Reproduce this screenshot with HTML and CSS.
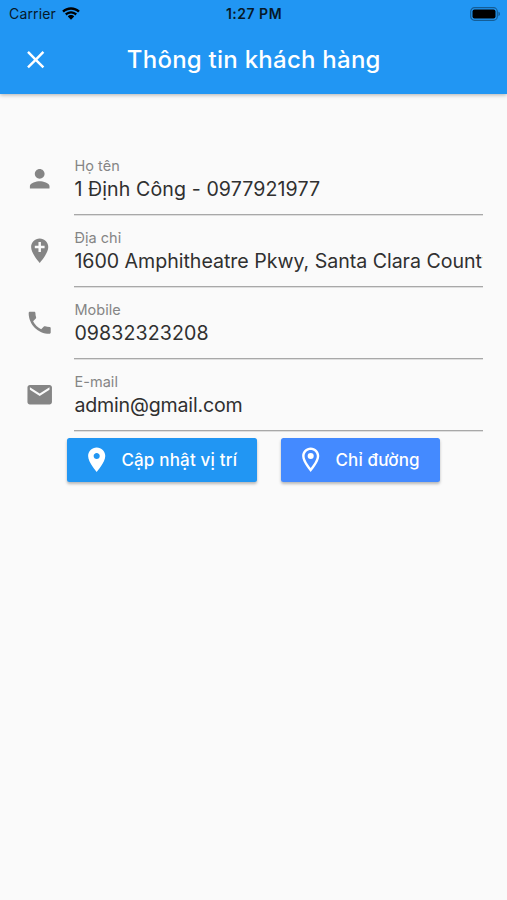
FILE: index.html
```html
<!DOCTYPE html>
<html lang="vi">
<head>
<meta charset="utf-8">
<title>Thông tin khách hàng</title>
<link rel="stylesheet" href="styles.css">
</head>
<body>
<header class="header">
  <div class="status">
    <div class="carrier"><span class="carrier-name">Carrier</span>
      <svg class="wifi" viewBox="0 0 18 13"><path d="M9 .2C5.6.2 2.500 1.500.2 3.700l1.700 1.800C3.800 3.700 6.300 2.700 9 2.700s5.200 1 7.100 2.800l1.700-1.800C15.500 1.500 12.400.2 9 .2zM9 4.200c-2.300 0-4.400.9-6 2.400l1.700 1.800C5.900 7.300 7.400 6.600 9 6.600s3.100.7 4.300 1.800L15 6.600c-1.600-1.500-3.700-2.400-6-2.400zM9 8.100c-1.300 0-2.400.5-3.200 1.300L9 12.800l3.200-3.400C11.400 8.600 10.300 8.100 9 8.100z"/></svg>
    </div>
    <span class="time">1:27 PM</span>
    <svg class="battery" viewBox="0 0 31 14"><rect x=".7" y=".7" width="26.600" height="12.600" rx="3.800" fill="none" stroke="#000" stroke-opacity=".38" stroke-width="1.200"/><rect x="2.500" y="2.500" width="23" height="9" rx="2"/><path d="M28.500 4.800c1.800.6 1.800 3.800 0 4.400z" opacity=".45"/></svg>
  </div>
  <div class="bar">
    <svg class="close" viewBox="0 0 24 24"><path d="M19 6.410L17.590 5 12 10.590 6.410 5 5 6.410 10.590 12 5 17.590 6.410 19 12 13.410 17.590 19 19 17.590 13.410 12z"/></svg>
    <h1 class="title">Thông tin khách hàng</h1>
  </div>
</header>
<main class="content">
  <div class="row">
    <svg class="icon" viewBox="0 0 24 24"><path d="M12 12c2.210 0 4-1.790 4-4s-1.790-4-4-4-4 1.790-4 4 1.790 4 4 4zm0 2c-2.670 0-8 1.340-8 4v2h16v-2c0-2.660-5.330-4-8-4z"/></svg>
    <div class="field"><span class="label">Họ tên</span><span class="value name">1 Định Công - 0977921977</span></div>
  </div>
  <div class="row">
    <svg class="icon" viewBox="0 0 24 24"><path d="M12 2C8.140 2 5 5.140 5 9c0 5.250 7 13 7 13s7-7.750 7-13c0-3.860-3.140-7-7-7zm4 8h-3v3h-2v-3H8V8h3V5h2v3h3v2z"/></svg>
    <div class="field"><span class="label">Địa chỉ</span><span class="value address">1600 Amphitheatre Pkwy, Santa Clara County</span></div>
  </div>
  <div class="row">
    <svg class="icon" viewBox="0 0 24 24"><path d="M6.620 10.790c1.440 2.830 3.760 5.140 6.590 6.590l2.200-2.200c.27-.27.67-.36 1.020-.24 1.120.37 2.330.57 3.570.57.55 0 1 .45 1 1V20c0 .55-.45 1-1 1-9.390 0-17-7.610-17-17 0-.55.45-1 1-1h3.500c.55 0 1 .45 1 1 0 1.250.2 2.450.57 3.570.11.35.03.74-.25 1.020l-2.200 2.200z"/></svg>
    <div class="field"><span class="label">Mobile</span><span class="value phone">09832323208</span></div>
  </div>
  <div class="row">
    <svg class="icon" viewBox="0 0 24 24"><path d="M20 4H4c-1.100 0-1.990.9-1.990 2L2 18c0 1.100.9 2 2 2h16c1.100 0 2-.9 2-2V6c0-1.100-.9-2-2-2zm0 4l-8 5-8-5V6l8 5 8-5v2z"/></svg>
    <div class="field"><span class="label">E-mail</span><span class="value email">admin@gmail.com</span></div>
  </div>
  <div class="actions">
    <button class="button update" type="button"><svg viewBox="0 0 24 24"><path d="M12 2C8.130 2 5 5.130 5 9c0 5.250 7 13 7 13s7-7.750 7-13c0-3.870-3.130-7-7-7zm0 9.500c-1.380 0-2.500-1.120-2.500-2.500s1.120-2.500 2.500-2.500 2.500 1.120 2.500 2.500-1.120 2.500-2.500 2.500z"/></svg><span>Cập nhật vị trí</span></button>
    <button class="button route" type="button"><svg viewBox="0 0 24 24"><path d="M12 2C8.130 2 5 5.130 5 9c0 5.250 7 13 7 13s7-7.750 7-13c0-3.870-3.130-7-7-7zM7 9c0-2.760 2.240-5 5-5s5 2.240 5 5c0 2.880-2.880 7.190-5 9.880C9.920 16.210 7 11.850 7 9z"/><circle cx="12" cy="9" r="2.500"/></svg><span>Chỉ đường</span></button>
  </div>
</main>
</body>
</html>
```
FILE: styles.css
```css
* { box-sizing: border-box; }
body {
  margin: 0;
  min-height: 900px;
  background: #fafafa;
  font-family: Inter, "Liberation Sans", sans-serif;
  overflow-x: hidden;
}
svg { display: block; flex: none; }
.header {
  height: 94px;
  background: #2196f3;
  box-shadow: 0 1px 4px rgba(0, 0, 0, .3);
}
.status {
  display: grid;
  grid-template-columns: 1fr auto 1fr;
  align-items: center;
  height: 27px;
  padding: 0 6px 0 9px;
  color: #06192a;
}
.carrier { display: flex; align-items: center; gap: 6px; }
.carrier-name { font-size: 14px; letter-spacing: .15px; }
.wifi { width: 18px; height: 13px; }
.time { margin-right: 2px; font-size: 14px; font-weight: 600; letter-spacing: .5px; }
.battery { width: 31px; height: 14px; justify-self: end; }
.bar {
  display: grid;
  grid-template-columns: 50px 1fr 50px;
  align-items: center;
  height: 66px;
  padding: 0 20px 0 20.500px;
}
.close { width: 29.400px; height: 29.400px; fill: #fff; }
.title {
  margin: 0;
  font-size: 24px;
  line-height: 30px;
  font-weight: 500;
  letter-spacing: .25px;
  color: #fff;
  text-align: center;
  white-space: nowrap;
}
.content { padding: 49px 24.500px 0 25px; }
.row { display: flex; gap: 20px; height: 72px; }
.icon { width: 29.400px; height: 29.400px; margin-top: 21px; fill: #858585; }
.field {
  display: flex;
  flex-direction: column;
  flex: 1;
  min-width: 0;
  padding-top: 13px;
  border-bottom: 1px solid #a8a8a8;
  box-shadow: 0 1px 0 #dedede;
}
.label { font-size: 14.500px; line-height: 19px; letter-spacing: .05px; color: #858585; }
.value {
  margin-top: 1px;
  font-size: 19.600px;
  line-height: 26px;
  color: #303030;
  white-space: nowrap;
  overflow: hidden;
}
.name { letter-spacing: .09px; }
.address { letter-spacing: -.03px; }
.phone { letter-spacing: .1px; }
.email { letter-spacing: -.18px; }
.actions { display: flex; gap: 24px; margin: 7px 0 0 42px; }
.button {
  display: flex;
  align-items: center;
  gap: 10px;
  height: 44px;
  padding: 0 0 0 15px;
  border: 0;
  border-radius: 2.500px;
  color: #fff;
  font: 500 17px/22px Inter, "Liberation Sans", sans-serif;
  white-space: nowrap;
  box-shadow: 0 2px 3px rgba(0, 0, 0, .27);
}
.button svg { width: 29.400px; height: 29.400px; fill: #fff; }
.update { width: 190px; letter-spacing: .18px; background: #2196f3; }
.route { width: 159px; letter-spacing: .15px; background: #448aff; }
```
